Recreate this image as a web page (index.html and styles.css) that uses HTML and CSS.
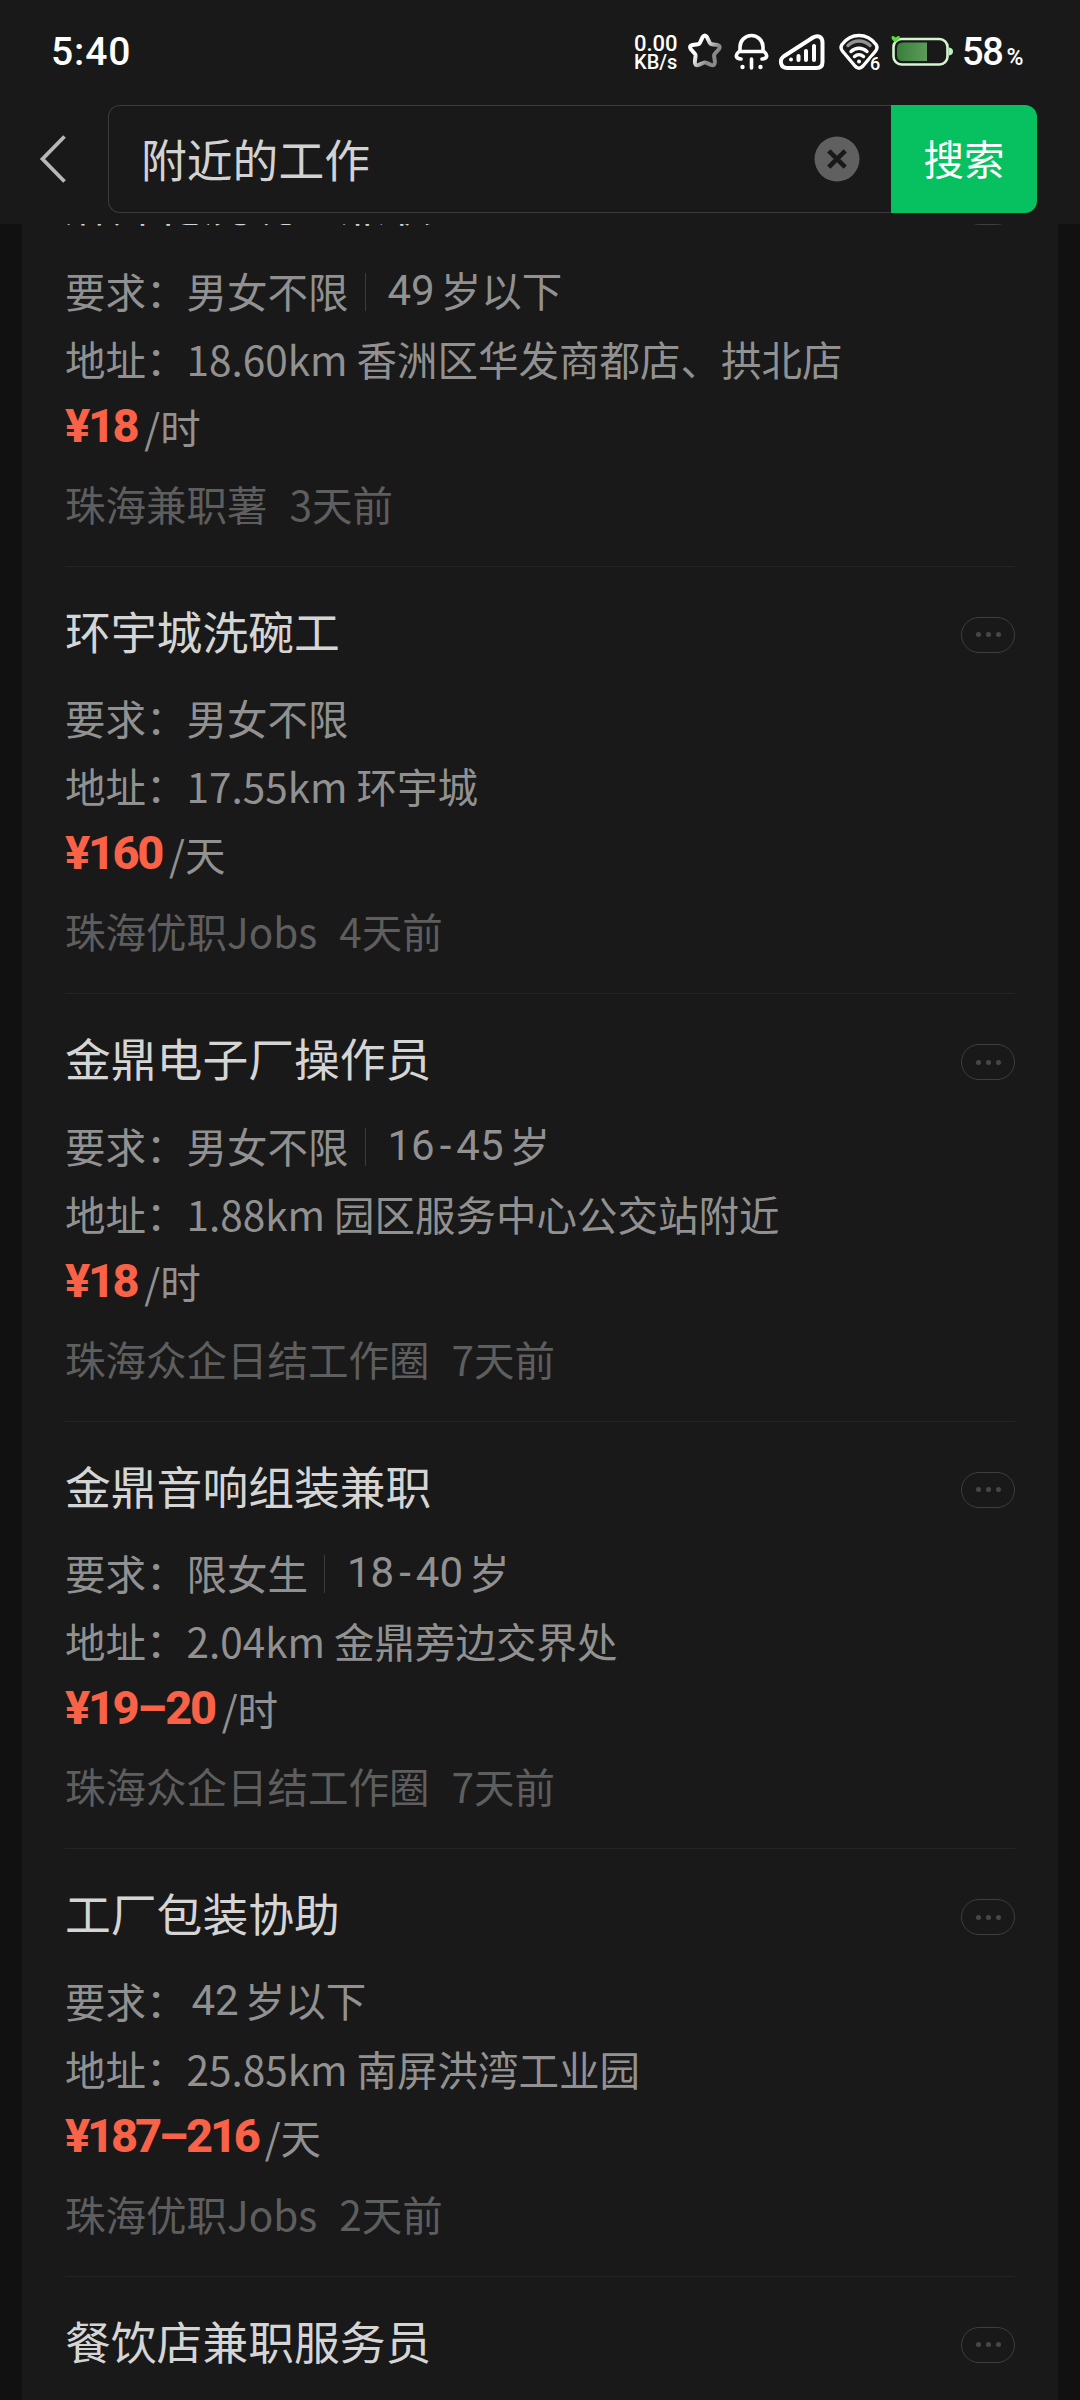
FILE: index.html
```html
<!DOCTYPE html>
<html lang="zh-CN">
<head>
<meta charset="utf-8">
<title>附近的工作</title>
<link rel="stylesheet" href="styles.css">
</head>
<body>
<header class="top">
  <div class="status">
    <span class="time">5:40</span>
    <div class="indicators">
      <span class="speed"><span class="speed-num">0.00</span><span class="speed-unit">KB/s</span></span>
      <svg class="i-star" width="34" height="36" viewBox="0 0 34 36" fill="none" stroke-width="4" stroke-linejoin="round"><defs><linearGradient id="sg" x1="0" y1="0" x2="1" y2=".7"><stop offset=".4" stop-color="#fff"/><stop offset=".8" stop-color="#8a8a8a"/></linearGradient></defs><path stroke="url(#sg)" d="M14.6 4.2q2.2-3.4 4.4 0l2.8 5.6q.6 1.2 2 1.4l5.4.8q4 .9 1.6 4.2l-4 4.6q-.9 1-.7 2.200l.8 5.500q.3 4.600-3.900 3.400l-5-2.200q-1.200-.6-2.400 0l-4.800 2.200q-4.200 1.200-3.900-3.400l.7-5.500q.1-1.200-.7-2.200l-4-4.600q-2.400-3.300 1.600-4.200l5.400-.8q1.400-.2 2-1.400z"/></svg>
      <svg class="i-lamp" width="35" height="38" viewBox="0 0 35 38" fill="none" stroke="#fff" stroke-width="3.600" stroke-linecap="round"><path d="M6 18.500V14a11.500 11.500 0 0 1 23 0v4.500M5 18.500h25M5 18.500c-4.500 4-3 7 2 7.500M30 18.500c4.500 4 3 7-2 7.500M17.500 26v9"/><g fill="#fff" stroke="none"><circle cx="8.500" cy="34" r="2.200"/><circle cx="26.500" cy="34" r="2.200"/></g></svg>
      <svg class="i-signal" width="46" height="36" viewBox="0 0 46 36" fill="none" stroke="#fff" stroke-width="4" stroke-linecap="round" stroke-linejoin="round"><path d="M4.500 22.500L34 3.500c5-3 9.500-.5 9.500 5V28c0 4-2 6-6 6H8c-6.500 0-8-8-3.500-11.500z"/><path d="M19.500 22v4M27 17v9M35 12v14"/><circle cx="12" cy="25.500" r="2" fill="#fff" stroke="none"/></svg>
      <svg class="i-wifi" width="42" height="38" viewBox="0 0 42 38" fill="none" stroke="#fff" stroke-width="3.400" stroke-linecap="round" stroke-linejoin="round"><path d="M3 11.500C12-.5 28-.5 37 11.500c1.800 2.800 1 5-.8 7L24 33c-2.800 3-5.200 3-8 0L3.800 18.500C2 16.500 1.200 14.300 3 11.500z"/><path stroke="#929292" d="M9 12.500c6.500-6 15.500-6 22 0"/><path d="M12 18.500c4.700-4.300 11.300-4.300 16 0M15.500 23.500c2.700-2.400 6.300-2.400 9 0"/><circle cx="20" cy="28.500" r="2" fill="#fff" stroke="none"/><text class="wifi-gen" x="31" y="37">6</text></svg>
      <svg class="i-battery" width="64" height="32" viewBox="0 0 64 32"><defs><linearGradient id="bg"><stop offset="0" stop-color="#38803c"/><stop offset="1" stop-color="#5d9b5b"/></linearGradient></defs><rect x="2.500" y="4" width="54" height="25.500" rx="8" fill="none" stroke="#d3f5d2" stroke-width="2.600"/><path d="M12 7.500H36v18.500H12q-6 0-6-6v-6.500q0-6 6-6z" fill="url(#bg)"/><path d="M58 12.500q4 .5 4 4t-4 4z" fill="#b9f2bb"/><path d="M4 7.500L.8 4Q-.2.500 2.500 1L4.500 2.500 7 1q3 0 1.500 3z" fill="#55df35"/></svg>
      <span class="percent">58<small>%</small></span>
    </div>
  </div>
  <div class="search">
    <svg class="back" width="28" height="50" viewBox="0 0 28 50" fill="none" stroke="#b7b7b7" stroke-width="3.800"><path d="M24.500 2.500L2.500 25l22 22.500"/></svg>
    <div class="field">
      <span>附近的工作</span>
      <svg width="46" height="46" viewBox="0 0 46 46"><circle cx="23" cy="23" r="22.500" fill="#606060"/><path d="M14.800 14.800l16.400 16.400M31.200 14.800L14.800 31.200" stroke="#191919" stroke-width="4.600"/></svg>
    </div>
    <button class="go">搜索</button>
  </div>
</header>
<main class="list">
  <article class="job">
    <div class="head"><h2>麻辣花洗碗－兼职</h2><span class="more"><i></i><i></i><i></i></span></div>
    <p class="row req">要求：男女不限<b class="bar"></b><span class="age">49<em>岁以下</em></span></p>
    <p class="row">地址：18.60km 香洲区华发商都店、拱北店</p>
    <p class="row pay"><strong>¥18</strong>/时</p>
    <p class="row meta"><span>珠海兼职薯</span><span>3天前</span></p>
  </article>
  <article class="job">
    <div class="head"><h2>环宇城洗碗工</h2><span class="more"><i></i><i></i><i></i></span></div>
    <p class="row req">要求：男女不限</p>
    <p class="row">地址：17.55km 环宇城</p>
    <p class="row pay"><strong>¥160</strong>/天</p>
    <p class="row meta"><span>珠海优职Jobs</span><span>4天前</span></p>
  </article>
  <article class="job">
    <div class="head"><h2>金鼎电子厂操作员</h2><span class="more"><i></i><i></i><i></i></span></div>
    <p class="row req">要求：男女不限<b class="bar"></b><span class="age">16<u>-</u>45<em>岁</em></span></p>
    <p class="row">地址：1.88km 园区服务中心公交站附近</p>
    <p class="row pay"><strong>¥18</strong>/时</p>
    <p class="row meta"><span>珠海众企日结工作圈</span><span>7天前</span></p>
  </article>
  <article class="job">
    <div class="head"><h2>金鼎音响组装兼职</h2><span class="more"><i></i><i></i><i></i></span></div>
    <p class="row req">要求：限女生<b class="bar"></b><span class="age">18<u>-</u>40<em>岁</em></span></p>
    <p class="row">地址：2.04km 金鼎旁边交界处</p>
    <p class="row pay"><strong>¥19<u>–</u>20</strong>/时</p>
    <p class="row meta"><span>珠海众企日结工作圈</span><span>7天前</span></p>
  </article>
  <article class="job">
    <div class="head"><h2>工厂包装协助</h2><span class="more"><i></i><i></i><i></i></span></div>
    <p class="row req">要求：<span class="age first">42<em>岁以下</em></span></p>
    <p class="row">地址：25.85km 南屏洪湾工业园</p>
    <p class="row pay"><strong class="tight">¥187<u>–</u>216</strong>/天</p>
    <p class="row meta"><span>珠海优职Jobs</span><span>2天前</span></p>
  </article>
  <article class="job">
    <div class="head"><h2>餐饮店兼职服务员</h2><span class="more"><i></i><i></i><i></i></span></div>
  </article>
</main>
</body>
</html>
```
FILE: styles.css
```css
* { box-sizing: border-box; }
html, body { margin: 0; height: 2400px; overflow: hidden; }
body {
  background: #111;
  color: #919191;
  font-family: "Noto Sans CJK SC", sans-serif;
  display: flex;
  flex-direction: column;
}
svg { display: block; flex: none; overflow: visible; }

.top { height: 224px; flex: none; background: #191919; }
.status {
  height: 105px;
  padding: 0 56px 0 51px;
  display: flex;
  justify-content: space-between;
  color: #fff;
  font-family: Roboto, sans-serif;
  font-weight: 500;
}
.time { font-size: 39px; line-height: 104px; letter-spacing: .9px; }
.indicators { display: flex; align-items: flex-start; padding-top: 33px; }
.speed { display: flex; flex-direction: column; width: 54px; padding-top: 1px; font-size: 22px; line-height: 19px; }
.speed-unit { font-size: 20px; }
.i-star { margin-right: 12px; }
.i-lamp { margin-right: 10px; }
.i-signal { margin: 1px 14px 0 0; }
.i-wifi { margin-right: 10px; }
.wifi-gen { font: 500 18px Roboto, sans-serif; fill: #fff; stroke: #191919; stroke-width: 3px; paint-order: stroke; }
.i-battery { margin: 2px 7px 0 0; }
.percent { font-size: 38px; line-height: 38px; white-space: nowrap; width: 62px; letter-spacing: -1.300px; }
.percent small { font-size: 23px; margin-left: 4px; }

.search { display: flex; height: 108px; padding: 0 43px 0 40px; }
.back { margin: 29px 40px 0 0; }
.field {
  flex: 1;
  display: flex;
  align-items: center;
  justify-content: space-between;
  padding: 0 31px 0 32px;
  border: 1px solid #3b3b3b;
  border-right: 0;
  border-radius: 12px 0 0 12px;
  color: #d2d2d2;
  font-size: 45.800px;
}
.field span { margin-top: -2px; }
.go {
  width: 146px;
  border: 0;
  border-radius: 0 12px 12px 0;
  background: #07c160;
  color: #fff;
  font: 400 40.500px "Noto Sans CJK SC", sans-serif;
  padding: 0 0 3px;
}

.list { flex: 1; min-height: 0; margin: 0 22px; padding: 0 43px; background: #191919; overflow: hidden; }
.job { height: 427.500px; padding-top: 35px; border-bottom: 1.400px solid #252525; }
.job:first-child { margin-top: -84.800px; }
.job:last-child { border: 0; }
.head { display: flex; justify-content: space-between; height: 56px; margin-bottom: 26.400px; }
h2 { margin: 0; font-size: 45.800px; line-height: 56px; font-weight: 400; color: #d5d5d5; white-space: nowrap; }
.more {
  display: flex;
  align-items: center;
  justify-content: center;
  gap: 5px;
  width: 54px;
  height: 36px;
  margin-top: 15px;
  border: 1.400px solid #3e3e3e;
  border-radius: 18px;
}
.more i { width: 5px; height: 5px; border-radius: 50%; background: #474747; }
.row { margin: 0; height: 68px; line-height: 68px; font-size: 40.500px; white-space: nowrap; display: flex; }
.bar { width: 1px; height: 38px; margin: 16px 0 0 16px; background: #3b3b3b; }
.age { display: flex; margin-left: 22px; font-family: Roboto, sans-serif; font-size: 42px; }
.age.first { margin-left: 5px; }
.age em { font: 40.500px/66px "Noto Sans CJK SC", sans-serif; margin-left: 6px; }
.age u { text-decoration: none; margin: 0 5px; }
.pay strong { display: flex; font: 800 47px/65px Roboto, sans-serif; letter-spacing: -2.400px; color: #fa6248; margin-right: 7px; }
.pay .tight { letter-spacing: -3.200px; }
.pay u { text-decoration: none; margin: 0 1px 0 0; }
.meta { gap: 22px; margin-top: 9px; color: #5e5e5e; }
```
